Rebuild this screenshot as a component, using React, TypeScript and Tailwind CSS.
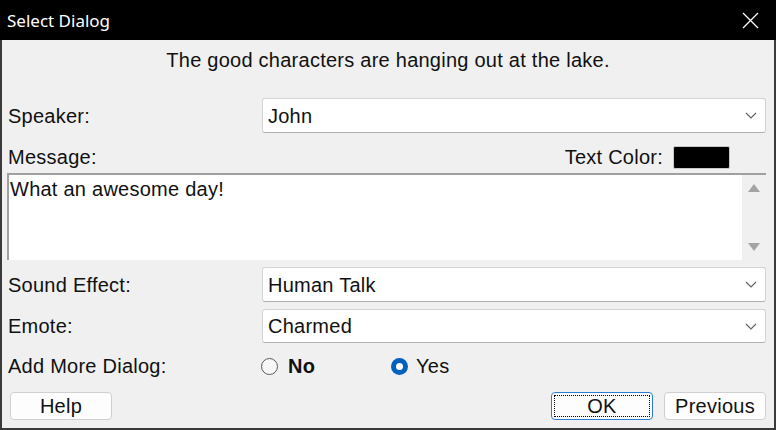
import React from 'react';

const font = { fontFamily: '"Liberation Sans", Arial, sans-serif', letterSpacing: '0.25px' };

const Chevron: React.FC = () => (
  <svg width="12" height="7" viewBox="0 0 12 7" className="shrink-0">
    <path d="M1 1 L6 6 L11 1" fill="none" stroke="#606060" strokeWidth="1.2" />
  </svg>
);

const Combo: React.FC<{ value: string; h: string }> = ({ value, h }) => (
  <div
    className={`flex-1 ${h} flex items-center justify-between bg-white border border-[#d4d4d4] border-b-[#b0b0b0] rounded-[3px] pl-[5px] pr-[8px]`}
  >
    <span className="text-[20px] leading-none text-[#111]">{value}</span>
    <Chevron />
  </div>
);

const FormRow: React.FC<{ label: string; value: string; h: string; className?: string }> = ({
  label,
  value,
  h,
  className = '',
}) => (
  <div className={`flex items-center ${className}`}>
    <div className="w-[260px] pl-[6px] text-[20px] leading-none text-[#111]">{label}</div>
    <Combo value={value} h={h} />
  </div>
);

const Button: React.FC<{ label: string; focused?: boolean; className?: string }> = ({
  label,
  focused,
  className = '',
}) => (
  <div
    className={`w-[102px] h-[28px] rounded-[4px] bg-[#fdfdfd] border flex items-center justify-center p-[2px] ${
      focused ? 'border-[#2a7fd4]' : 'border-[#d0d0d0]'
    } ${className}`}
  >
    <div
      className={`w-full h-full flex items-center justify-center text-[20px] leading-none text-[#111] ${
        focused ? 'border border-dotted border-black' : ''
      }`}
    >
      {label}
    </div>
  </div>
);

export default function App() {
  return (
    <div className="w-[776px] h-[430px] bg-black flex flex-col overflow-hidden" style={font}>
      {/* title bar */}
      <div className="h-[40px] flex items-center justify-between pl-[7px] pr-[17px] shrink-0">
        <span
          className="text-white text-[17px] leading-none"
          style={{ fontFamily: '"Noto Sans", "Open Sans", sans-serif', letterSpacing: '0px' }}
        >
          Select Dialog
        </span>
        <svg width="17" height="17" viewBox="0 0 17 17">
          <path d="M1 1 L16 16 M16 1 L1 16" stroke="#ffffff" strokeWidth="1.3" />
        </svg>
      </div>

      {/* body */}
      <div className="flex-1 bg-[#f0f0f0] border-x-2 border-b-2 border-[#3a3a3a] flex flex-col pr-[8px]">
        <div className="pt-[8px] h-[32px] text-center text-[20px] leading-[24px] text-[#111] pl-[8px]">
          The good characters are hanging out at the lake.
        </div>

        <FormRow label="Speaker:" value="John" h="h-[35px]" className="mt-[26px]" />

        <div className="h-[40px] pt-[8px] flex items-center justify-between">
          <span className="pl-[6px] text-[20px] leading-none text-[#111]">Message:</span>
          <div className="flex items-center gap-[10px] mr-[36px]">
            <span className="text-[20px] leading-none text-[#111]">Text Color:</span>
            <div className="w-[57px] h-[23px] bg-black border border-[#c8c8c8] rounded-[2px]" />
          </div>
        </div>

        <div className="ml-[5px] h-[87px] flex bg-white border-t-2 border-l-2 border-[#a0a0a0]">
          <div className="flex-1 pl-[1px] pt-[2px] text-[20px] leading-[24px] text-[#111]">
            What an awesome day!
          </div>
          <div className="w-[24px] bg-[#f0f0f0] flex flex-col items-center justify-between py-[9px]">
            <svg width="12" height="8" viewBox="0 0 12 8">
              <path d="M0 8 L6 0 L12 8 Z" fill="#a3a3a3" />
            </svg>
            <svg width="12" height="8" viewBox="0 0 12 8">
              <path d="M0 0 L12 0 L6 8 Z" fill="#a3a3a3" />
            </svg>
          </div>
        </div>

        <FormRow label="Sound Effect:" value="Human Talk" h="h-[35px]" className="mt-[7px]" />
        <FormRow label="Emote:" value="Charmed" h="h-[34px]" className="mt-[7px]" />

        <div className="h-[46px] flex items-center">
          <div className="w-[259px] pl-[6px] text-[20px] leading-none text-[#111]">Add More Dialog:</div>
          <div className="w-[130px] flex items-center gap-[10px]">
            <div className="w-[17px] h-[17px] rounded-full border border-[#5a5a5a] bg-[#f7f7f7]" />
            <span className="text-[20px] leading-none font-bold text-[#111]">No</span>
          </div>
          <div className="flex items-center gap-[8px]">
            <div className="w-[17px] h-[17px] rounded-full bg-[#0060c0] flex items-center justify-center">
              <div className="w-[7px] h-[7px] rounded-full bg-white" />
            </div>
            <span className="text-[20px] leading-none text-[#111]">Yes</span>
          </div>
        </div>

        <div className="mt-[3px] flex items-center">
          <Button label="Help" className="ml-[8px]" />
          <div className="flex-1" />
          <Button label="OK" focused />
          <Button label="Previous" className="ml-[11px]" />
        </div>
      </div>
    </div>
  );
}
